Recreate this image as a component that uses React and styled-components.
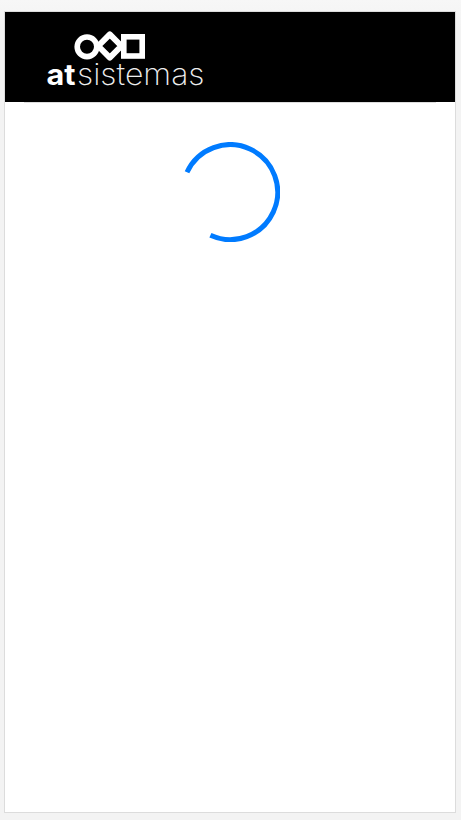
import React from 'react';
import styled, { createGlobalStyle } from 'styled-components';

const GlobalStyle = createGlobalStyle`
  html, body { margin: 0; padding: 0; }
  body { background: #f4f4f4; font-family: Inter, "Liberation Sans", sans-serif; }
`;

const Page = styled.div`
  box-sizing: border-box;
  height: 820px;
  padding: 11px 5px 7px 4px;
  background: linear-gradient(#f7f7f7, #f3f3f3 30px);
  overflow: hidden;
`;

const Device = styled.main`
  box-sizing: border-box;
  width: 452px;
  height: 802px;
  border: 1px solid #dcdcdc;
  background: #fff;
`;

const Header = styled.header`
  height: 90px;
  background: #000;
`;

const Logo = styled.svg`
  display: block;
  width: 220px;
  height: 90px;
`;

const Wordmark = styled.text`
  font-family: Inter, "Liberation Sans", sans-serif;
  font-size: ${(p) => p.$size}px;
  font-weight: ${(p) => p.$weight};
  fill: ${(p) => p.$color};
`;

const Divider = styled.div`
  height: 1px;
  margin: 0 19px;
  background: #ddd;
`;

const Content = styled.section`
  display: flex;
  justify-content: center;
  padding-top: 39px;
`;

const Spinner = styled.svg`
  width: 100px;
  height: 100px;
`;

export default function App() {
  return (
    <Page>
      <GlobalStyle />
      <Device>
        <Header>
          <Logo viewBox="5 12 220 90" role="img" aria-label="atsistemas">
            <g fill="none" stroke="#fff">
              <circle cx="87" cy="46.8" r="9.8" strokeWidth="5.6" />
              <path d="M109.8 34.4 L121.4 46 L109.8 57.6 L98.2 46 Z" strokeWidth="6" strokeLinejoin="round" />
              <rect x="123.8" y="36.8" width="18.4" height="19.2" strokeWidth="5.6" />
            </g>
            <Wordmark x="46.5" y="85" $size={29} $weight={700} $color="#fff" textLength="29" lengthAdjust="spacingAndGlyphs">at</Wordmark>
            <Wordmark x="77" y="85" $size={30} $weight={200} $color="#eee" textLength="127.5" lengthAdjust="spacingAndGlyphs">sistemas</Wordmark>
          </Logo>
        </Header>
        <Divider />
        <Content>
          <Spinner viewBox="0 0 100 100" role="img" aria-label="Loading">
            <path d="M7 30.3 A47.5 47.5 0 1 1 30.4 93.3" fill="none" stroke="#007bff" strokeWidth="5" />
          </Spinner>
        </Content>
      </Device>
    </Page>
  );
}
